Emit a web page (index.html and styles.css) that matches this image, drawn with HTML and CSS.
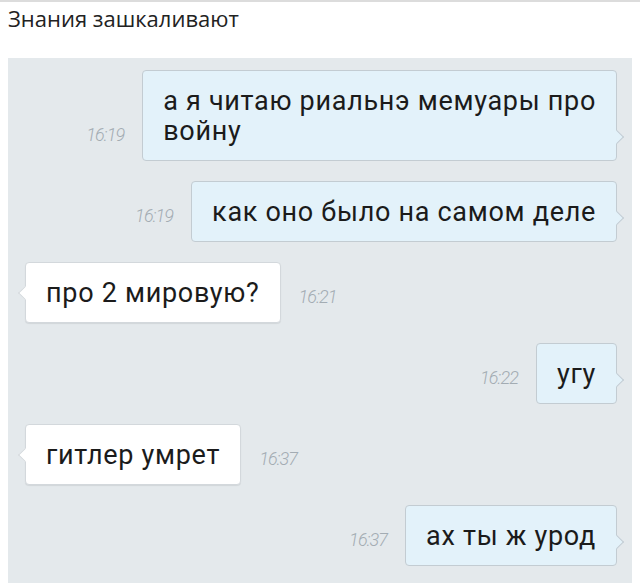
FILE: index.html
```html
<!DOCTYPE html>
<html lang="ru">
<head>
  <meta charset="UTF-8">
  <meta name="viewport" content="width=device-width, initial-scale=1.0">
  <title>Знания зашкаливают</title>
  <link rel="stylesheet" href="styles.css">
</head>
<body>
  <div class="page">
    <h1 class="title">Знания зашкаливают</h1>
    <div class="chat">
      <div class="row out">
        <span class="time">16:19</span>
        <div class="bubble">а я читаю риальнэ мемуары про<br>войну</div>
      </div>
      <div class="row out">
        <span class="time">16:19</span>
        <div class="bubble">как оно было на самом деле</div>
      </div>
      <div class="row in">
        <div class="bubble">про 2 мировую?</div>
        <span class="time">16:21</span>
      </div>
      <div class="row out">
        <span class="time">16:22</span>
        <div class="bubble">угу</div>
      </div>
      <div class="row in">
        <div class="bubble">гитлер умрет</div>
        <span class="time">16:37</span>
      </div>
      <div class="row out">
        <span class="time">16:37</span>
        <div class="bubble">ах ты ж урод</div>
      </div>
    </div>
  </div>
</body>
</html>
```

FILE: styles.css
```css
body {
  margin: 0;
  background: #fff;
  font-family: Roboto, "Noto Sans", sans-serif;
}
.page {
  border-top: 2px solid #dcdcdc;
}
.title {
  margin: 0;
  height: 56px;
  padding: 2px 8px 0;
  box-sizing: border-box;
  font-family: "Open Sans", sans-serif;
  font-size: 22px;
  font-weight: 400;
  line-height: 28px;
  color: #222;
}
.chat {
  margin: 0 8px;
  padding: 12px 15px 17px 17px;
  background: #e4e9ec;
  display: flex;
  flex-direction: column;
  gap: 20px;
}
.row {
  display: flex;
  align-items: flex-end;
  gap: 18px;
}
.row.out {
  justify-content: flex-end;
}
.time {
  padding-bottom: 16px;
  font-size: 18px;
  font-style: italic;
  font-weight: 300;
  line-height: 20px;
  letter-spacing: -0.9px;
  color: #a3acb3;
}
.bubble {
  position: relative;
  padding: 15px 20px 14px;
  border-radius: 4px;
  font-size: 27px;
  line-height: 30px;
  letter-spacing: 0.7px;
  color: #1b1b1b;
  white-space: nowrap;
}
.out .bubble {
  background: #e3f2fa;
  border: 1px solid #c3ccd2;
}
.in .bubble {
  background: #fff;
  border: 1px solid #d3d8dc;
  box-shadow: 0 1px 1px rgba(0, 0, 0, 0.08);
}
.bubble::after {
  content: "";
  position: absolute;
  width: 9px;
  height: 9px;
  transform: rotate(45deg);
}
.out .bubble::after {
  right: -6px;
  bottom: 18px;
  background: #e3f2fa;
  border-top: 1px solid #c3ccd2;
  border-right: 1px solid #c3ccd2;
}
.in .bubble::after {
  left: -6px;
  top: 25px;
  background: #fff;
  border-bottom: 1px solid #d3d8dc;
  border-left: 1px solid #d3d8dc;
}
```
